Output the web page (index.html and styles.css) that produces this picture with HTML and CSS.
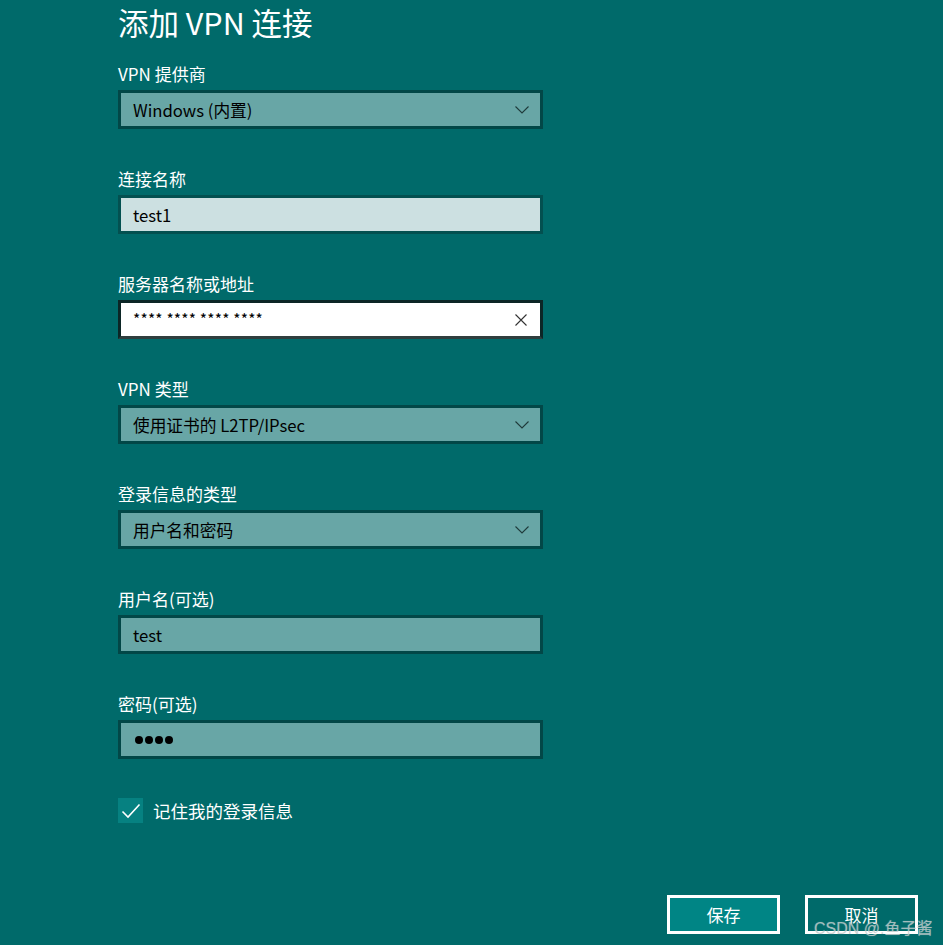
FILE: index.html
```html
<!DOCTYPE html>
<html lang="zh-CN">
<head>
<meta charset="UTF-8">
<title>添加 VPN 连接</title>
<link rel="stylesheet" href="styles.css">
</head>
<body>
<div class="page">
  <h1 class="title">添加 VPN 连接</h1>

  <div class="group">
    <div class="label">VPN 提供商</div>
    <div class="field select">
      <span>Windows (内置)</span>
      <svg class="chev" width="14" height="8" viewBox="0 0 14 8"><path d="M0.5 0.5 L7 7 L13.5 0.5" fill="none" stroke="#1f3a3a" stroke-width="1.1"/></svg>
    </div>
  </div>

  <div class="group">
    <div class="label">连接名称</div>
    <div class="field light"><span>test1</span></div>
  </div>

  <div class="group">
    <div class="label">服务器名称或地址</div>
    <div class="field focus">
      <span class="stars">**** **** **** ****</span>
      <svg class="clear" width="12" height="12" viewBox="0 0 12 12"><path d="M0.5 0.5 L11.5 11.5 M11.5 0.5 L0.5 11.5" fill="none" stroke="#333" stroke-width="1.1"/></svg>
    </div>
  </div>

  <div class="group">
    <div class="label">VPN 类型</div>
    <div class="field select">
      <span>使用证书的 L2TP/IPsec</span>
      <svg class="chev" width="14" height="8" viewBox="0 0 14 8"><path d="M0.5 0.5 L7 7 L13.5 0.5" fill="none" stroke="#1f3a3a" stroke-width="1.1"/></svg>
    </div>
  </div>

  <div class="group">
    <div class="label">登录信息的类型</div>
    <div class="field select">
      <span>用户名和密码</span>
      <svg class="chev" width="14" height="8" viewBox="0 0 14 8"><path d="M0.5 0.5 L7 7 L13.5 0.5" fill="none" stroke="#1f3a3a" stroke-width="1.1"/></svg>
    </div>
  </div>

  <div class="group">
    <div class="label">用户名(可选)</div>
    <div class="field"><span>test</span></div>
  </div>

  <div class="group">
    <div class="label">密码(可选)</div>
    <div class="field"><span class="dots"><i></i><i></i><i></i><i></i></span></div>
  </div>

  <label class="check">
    <span class="box">
      <svg width="20" height="16" viewBox="0 0 20 16"><path d="M1.5 8.5 L7 14 L18.5 1.5" fill="none" stroke="#fff" stroke-width="1.6"/></svg>
    </span>
    <span>记住我的登录信息</span>
  </label>
</div>

<div class="actions">
  <button class="btn primary">保存</button>
  <button class="btn">取消</button>
</div>

<div class="mark">CSDN @.鱼子酱</div>
</body>
</html>
```

FILE: styles.css
```css
body{
  margin:0;
  background:#006a6a;
  font-family:"Noto Sans CJK SC","Noto Sans",sans-serif;
  color:#fff;
  height:945px;
  overflow:hidden;
  position:relative;
}

.page{padding:0 0 0 118px;width:425px;}

.title{
  margin:0;
  font-size:30.5px;
  font-weight:400;
  line-height:40px;
  padding-top:2px;
  margin-bottom:21px;
}

.group{margin-bottom:39px;}

.label{
  font-size:17px;
  line-height:22px;
  margin-bottom:5px;
}

.field{
  box-sizing:border-box;
  height:39px;
  width:425px;
  border:3px solid #024747;
  background:#68a6a6;
  color:#000;
  font-size:16.7px;
  display:flex;
  align-items:center;
  padding:0 12px;
  justify-content:space-between;
}

.field.light{background:#cce0e1;border-color:#035050;}

.field.focus{background:#fff;border-color:#0c2626;border-bottom-color:#2f3e3e;}

.chev{margin-right:-1px;}
.clear{margin-right:1px;}

.stars{font-size:15.5px;letter-spacing:.2px;position:relative;top:-2px;}

.dots{display:flex;gap:2px;padding-left:2px;}
.dots i{width:8px;height:8px;border-radius:50%;background:#000;display:block;}

.check{
  display:flex;
  align-items:center;
  gap:10px;
  font-size:17.5px;
  margin-top:7px;
}
.check .box{
  width:25px;height:25px;
  background:#068181;
  display:flex;align-items:center;justify-content:center;
}

.actions{
  position:absolute;
  right:25px;
  top:895px;
  display:flex;
  gap:25px;
}
.btn{
  box-sizing:border-box;
  width:113px;height:39px;
  border:3px solid #fff;
  background:transparent;
  color:#fff;
  font-family:inherit;
  font-size:17px;
  padding:0;
}
.btn.primary{background:#008585;}

.mark{
  position:absolute;
  left:814px;
  top:915px;
  font-family:"Liberation Sans","Noto Sans CJK SC",sans-serif;
  font-size:16px;
  color:rgba(190,200,200,.75);
  text-shadow:0 0 1px rgba(255,255,255,.4);
}
```
